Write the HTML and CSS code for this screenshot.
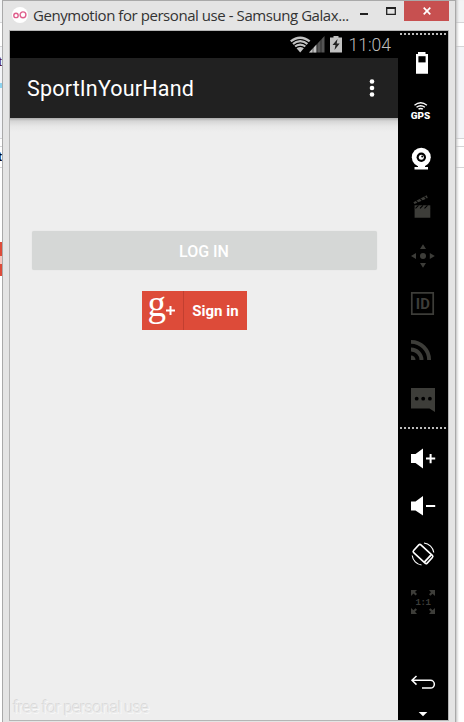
FILE: index.html
```html
<!DOCTYPE html>
<html lang="en">
<head>
<meta charset="utf-8">
<title>Genymotion</title>
<link rel="stylesheet" href="styles.css">
</head>
<body>
<div class="desktop">
  <div class="behind left">
    <span class="letter first">t</span>
    <span class="letter second">t</span>
    <i class="blue"></i><i class="red"></i>
  </div>
  <main class="window">
    <header class="titlebar">
      <svg class="logo" width="16" height="16" viewBox="0 0 16 16"><circle cx="8" cy="8" r="8" fill="#fff"/><g fill="none" stroke="#df5f8c" stroke-width="1.4"><circle cx="4" cy="8.4" r="2.2"/><circle cx="11" cy="7.8" r="2.9"/></g></svg>
      <h1>Genymotion for personal use - Samsung Galax...</h1>
      <div class="controls">
        <svg width="45" height="20" viewBox="0 0 45 20"><path d="M1 13h8" stroke="#222" stroke-width="2"/><path d="M27.700 7v6.300h8.600V7z" fill="none" stroke="#222" stroke-width="1.300"/><path d="M27 7h10" stroke="#222" stroke-width="2"/></svg>
        <button class="close" aria-label="Close"><svg width="8" height="8" viewBox="0 0 8 8"><path d="M.7.7l6.600 6.600M7.300.7L.7 7.300" stroke="#fff" stroke-width="1.700"/></svg></button>
      </div>
    </header>
    <div class="content">
      <section class="phone">
        <div class="status">
          <svg width="53" height="27" viewBox="0 0 53 27">
            <path d="M0 9.500Q10.200 1.500 20.400 9.500L10.200 21.500z" fill="#c2c2c2"/>
            <path d="M1 12.200Q10.200 4.800 19.400 12.200M3.200 14.800Q10.200 9 17.200 14.800M5.300 17.300Q10.200 13.500 15.100 17.300" fill="none" stroke="#000" stroke-width="1.100"/>
            <path d="M19 21.500L34.500 5v16.500z" fill="#545454"/><path d="M19 21.500l7.500-8v8z" fill="#c2c2c2"/>
            <path d="M23 9v13M27 5v17M31 4v18" stroke="#000" stroke-width=".5"/>
            <path d="M40 6.500h3.500V5h5v1.500H52v15H40z" fill="#c2c2c2"/><path d="M47.500 8l-5 6h3l-1 5 5.200-6.500h-3z" fill="#222"/>
          </svg>
          <span class="clock">11:04</span>
        </div>
        <div class="appbar"><h2>SportInYourHand</h2>
          <svg width="6" height="20" viewBox="0 0 6 20" fill="#fff"><circle cx="3" cy="3.500" r="2.300"/><circle cx="3" cy="10" r="2.300"/><circle cx="3" cy="16.500" r="2.300"/></svg>
        </div>
        <div class="screen">
          <button class="login">LOG IN</button>
          <button class="google"><span class="mark"><span class="g">g</span><svg width="9" height="9" viewBox="0 0 9 9"><path d="M0 4.500h9M4.500 0v9" stroke="#fff" stroke-width="2"/></svg></span><span class="signin">Sign in</span></button>
          <p class="watermark">free for personal use</p>
        </div>
      </section>
      <nav class="tools">
        <div class="dots"></div>
        <div class="group top">
          <svg viewBox="0 0 50 48"><path d="M18 16h2v-2h7.500v2H30v19.700H18z" fill="#fff"/><path d="M20.400 18.200h7.200v6.200h-7.200z"/></svg>
          <svg viewBox="0 0 50 48"><g fill="none" stroke="#fff" stroke-width="1.400"><path d="M16.500 19.200q6.200-4.800 12.400 0M18.500 21.300q4.200-3.200 8.400 0M20.500 23.200q2.200-1.500 4.400 0"/></g><text class="gps" x="12.800" y="33" textLength="19.500" lengthAdjust="spacingAndGlyphs">GPS</text></svg>
          <svg viewBox="0 0 50 48"><circle cx="23.300" cy="23.300" r="9.500" fill="#fff"/><circle cx="23.300" cy="23.300" r="4.700"/><circle cx="23.300" cy="23.300" r="2.500" fill="#fff"/><circle cx="24.200" cy="22.400" r="1"/><path d="M20 31h7v2h3v2.500H16.500V33H20z" fill="#fff"/></svg>
          <svg viewBox="0 0 50 48" class="dim"><path d="M16.600 26h15.700v9.700H16.600zM15.400 20.300L28.700 13.300l1.100 2.700-13.300 6z"/><path d="M16.600 23.300h15.700v3H16.600z"/><path d="M17.500 26.300l3-3M22 26.300l3-3M26.500 26.300l3-3M18 18.500l2.700 3M22.300 16.700l2.700 3M26.500 14.700l2.500 3" stroke="#000" stroke-width="1.100"/></svg>
          <svg viewBox="0 0 50 48" class="dim"><circle cx="25" cy="26" r="3"/><path d="M25 14.300l3 4.700h-6zM25 37.700l3-4.700h-6zM13 26l5-3v6zM36.800 26l-5-3v6z"/></svg>
          <svg viewBox="0 0 50 48" class="dim"><path d="M13.800 14.800h21.400v21.400H13.800z" fill="none" stroke="#3d3d39" stroke-width="1.700"/><text class="id" x="17.800" y="31" textLength="14" lengthAdjust="spacingAndGlyphs">ID</text></svg>
          <svg viewBox="0 0 50 48"><path d="M13 15.900A18.100 18.100 0 0 1 31.100 34M13 23.500A10.500 10.500 0 0 1 23.500 34" fill="none" stroke="#3d3d39" stroke-width="3.900"/><path d="M13 29.500A4.500 4.500 0 0 1 17.500 34H13z" fill="#3d3d39"/></svg>
          <svg viewBox="0 0 50 48" class="dim"><path d="M13 14h24v24l-5.500-3.400H13z"/><g fill="#000"><circle cx="18.700" cy="24.700" r="1.900"/><circle cx="25.200" cy="24.700" r="1.900"/><circle cx="31.900" cy="24.700" r="1.900"/></g></svg>
        </div>
        <div class="dots"></div>
        <div class="group bottom">
          <svg viewBox="0 0 50 48" fill="#fff"><path d="M13 20h4.500l7.500-5.500v20l-7.500-5.500H13zM28 23.600h3.600V20h2v3.600h3.600v2h-3.600v3.600h-2v-3.600H28z"/></svg>
          <svg viewBox="0 0 50 48" fill="#fff"><path d="M13 19.500h4.500L25 14v19.500L17.500 28.500H13zM28 23h9.200v2H28z"/></svg>
          <svg viewBox="0 0 50 48"><g fill="none" stroke="#fff" stroke-width="1.600"><g transform="rotate(43 25 24)"><rect x="15.700" y="18.700" width="18.600" height="10.600" rx="1.500"/><path d="M31.500 19v10" stroke-width="1.800"/></g><path d="M26 13a11 11 0 0 1 9.800 9.500M14.200 25.500A11 11 0 0 0 23.500 35" stroke-width="1.100"/></g></svg>
          <svg viewBox="0 0 50 48" class="dim"><path d="M13 12h6l-2 2 2 2-1.500 1.500-2-2L13 18zM37 12v6l-2.500-2.300-2 2L31 16.200l2-2-2-2.200zM13 36v-6l2.500 2.300 2-2 1.500 1.500-2 2 2 2.200zM37 36h-6l2-2.200-2-2 1.500-1.500 2 2L37 30z"/><text class="ratio" x="17.500" y="27.200" textLength="15.500">1:1</text></svg>
        </div>
        <div class="group back">
          <svg viewBox="0 0 50 48"><g fill="none" stroke="#fff" stroke-width="1.500"><path d="M14 22.300h18.500a3.850 3.850 0 0 1 0 7.700H24M18.500 18l-4.500 4.300 4.500 4.300"/></g></svg>
          <svg class="caret" viewBox="0 0 50 14"><path d="M20.700 6h8.600L25 10.300z" fill="#fff"/></svg>
        </div>
      </nav>
    </div>
  </main>
  <div class="behind right"></div>
</div>
</body>
</html>
```
FILE: styles.css
```css
* { box-sizing: border-box; margin: 0; padding: 0; }
body { width: 464px; height: 722px; overflow: hidden; background: #fff; font-family: Roboto, sans-serif; }
button { border: 0; font-family: inherit; }
svg { display: block; flex: none; }
.desktop { display: grid; grid-template-columns: 2px 454px 8px; height: 722px; }
.behind { position: relative; overflow: hidden; background: linear-gradient(#f3f4f5 22px, #d5d5d7 22px 23px, #fff 23px 46px, #d5d5d7 46px 47px, #f4f5f8 47px 138px, #d5d5d7 138px 139px, #fff 139px 146px, #d5d5d7 146px 147px, #fff 147px 167px, #d5d5d7 167px 168px, #fff 168px); }
.behind.right { box-shadow: inset 3px 0 3px -2px #b8b8b8; }
.letter { position: absolute; right: 0; font: 13px "Liberation Sans", sans-serif; }
.letter.first { top: 54px; color: #501030; }
.letter.second { top: 149px; font-weight: bold; color: #000; }
.blue, .red { position: absolute; left: 0; width: 2px; }
.blue { top: 83px; height: 5px; background: #8cd4f0; }
.red { top: 242px; height: 34px; background: linear-gradient(#dd4b39 14px, #f6c8c0 14px 22px, #dd4b39 22px); }
.window { display: flex; flex-direction: column; height: 724px; background: #e4e4e4; border: 1px solid #a9a9a9; padding: 0 6px; }
.titlebar { display: flex; height: 29px; padding-left: 3px; }
.logo { margin-top: 6px; }
h1 { width: 326px; margin-left: 5px; padding-top: 3px; white-space: nowrap; color: #333; font: 15px/22px "Open Sans", sans-serif; letter-spacing: -.44px; }
.controls { display: flex; }
.close { display: flex; align-items: center; justify-content: center; width: 45px; height: 20px; background: #c75050; }
.content { display: grid; grid-template-columns: 388px 50px; width: 440px; height: 691px; border: 1px solid #b5b5b5; flex: none; }
.phone { display: flex; flex-direction: column; min-width: 0; }
.status { display: flex; justify-content: flex-end; height: 27px; padding-right: 7px; background: #000; }
.status svg { margin-right: 1px; }
.clock { margin-left: 2px; width: 45px; text-align: right; font-size: 17.500px; line-height: 28px; color: #bdbdbd; font-weight: 300; }
.appbar { display: flex; align-items: center; justify-content: space-between; height: 60px; padding: 0 23px 0 17px; background: #212121; }
h2 { color: #fff; font-size: 21.500px; font-weight: 400; line-height: 30px; letter-spacing: .18px; padding-top: 2px; }
.screen { display: flex; flex-direction: column; align-items: center; flex: 1; background: linear-gradient(#aaa, #d5d5d5 3px, #e7e7e7 8px, #eee 14px); }
.login { width: 345px; height: 39px; margin: 113px 0 0; border-radius: 2px; background: #d5d7d6; box-shadow: 0 0 1px #d8d8d8; color: #fff; font-size: 16px; font-weight: 500; padding-top: 1px; }
.google { display: flex; width: 105px; height: 39px; margin: 21px 20px 0 0; background: #dd4b39; color: #fff; }
.mark { display: flex; align-items: center; width: 42px; border-right: 1px solid #c23f30; padding-left: 6px; }
.g { width: 18px; font: 37px/39px "Liberation Serif", serif; margin-top: -14px; }
.signin { width: 63px; padding: 1px 0 0 1px; font-size: 15px; font-weight: 700; line-height: 39px; }
.watermark { align-self: flex-start; margin: auto 0 1px 3px; font-size: 16.500px; font-weight: 300; line-height: 22px; letter-spacing: -.62px; color: #e9e9e9; text-shadow: -1px -1px 0 #d8d8d8, 1px 1px 0 #f8f8f8; }
.tools { display: flex; flex-direction: column; background: #000; }
.tools svg { width: 50px; height: 48px; }
.dots { width: 46px; height: 2px; margin: 2px 0 0 2px; background: repeating-linear-gradient(90deg, #bbb 0 2px, #000 2px 4px); }
.group.top { margin: 3px 0; }
.group.bottom { margin-top: 5px; }
.group.back { margin-top: 32px; }
.tools .caret { height: 14px; }
.dim { fill: #3d3d39; }
.gps { fill: #fff; font: 900 8.500px Roboto, sans-serif; }
.id { font: bold 15px Roboto, sans-serif; }
.ratio { font: bold 9px "Liberation Mono", monospace; }
```
